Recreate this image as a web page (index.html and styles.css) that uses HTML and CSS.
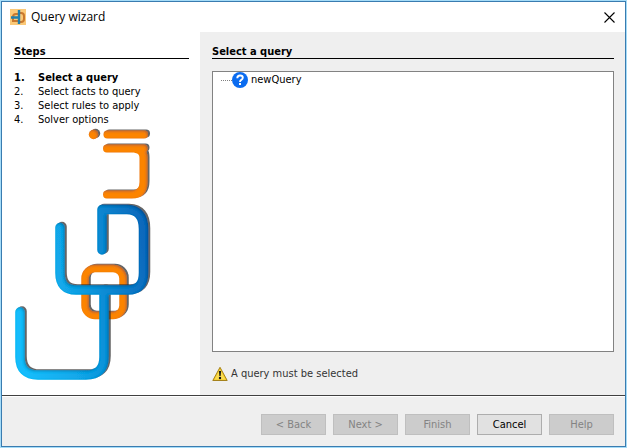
FILE: index.html
```html
<!DOCTYPE html>
<html lang="en">
<head>
<meta charset="utf-8">
<title>Query wizard</title>
<link rel="stylesheet" href="styles.css">
</head>
<body>
<div class="window">
  <header class="titlebar">
    <svg class="app-icon" viewBox="0 0 16 16" aria-hidden="true">
      <rect width="16" height="16" fill="#fbc978"/>
      <path d="M8 4H11Q14 4 14 7V10Q14 13 11 13H8M8 5H6Q3 5 3 8V12H8" fill="none" stroke="#c9792f" stroke-width="2"/>
      <path d="M1 8.500H9M9 1V15" fill="none" stroke="#1f7fae" stroke-width="2.400"/>
    </svg>
    <h1 class="title">Query wizard</h1>
    <button class="close" type="button" aria-label="Close">
      <svg class="close-icon" viewBox="0 0 11 11" aria-hidden="true"><path d="M.5 .5L10.500 10.500M10.500 .5L.5 10.500" stroke="#000" stroke-width="1.100"/></svg>
    </button>
  </header>
  <main class="main">
    <aside class="steps">
      <h2 class="heading">Steps</h2>
      <ol class="step-list">
        <li class="step current"><span class="num">1.</span><span>Select a query</span></li>
        <li class="step"><span class="num">2.</span><span>Select facts to query</span></li>
        <li class="step"><span class="num">3.</span><span>Select rules to apply</span></li>
        <li class="step"><span class="num">4.</span><span>Solver options</span></li>
      </ol>
      <svg class="logo" viewBox="14 127 140 257" aria-hidden="true">
        <defs>
          <linearGradient id="blue" gradientUnits="userSpaceOnUse" x1="15" y1="290" x2="150" y2="270">
            <stop offset="0" stop-color="#12bcfb"/>
            <stop offset=".35" stop-color="#12a8ea"/>
            <stop offset=".7" stop-color="#0d86d0"/>
            <stop offset="1" stop-color="#0c68bb"/>
          </linearGradient>
          <filter id="bevel" filterUnits="userSpaceOnUse" x="10" y="122" width="150" height="266">
            <feOffset in="SourceAlpha" dx="-1" dy="1" result="shifted"/>
            <feGaussianBlur in="shifted" stdDeviation="1.1" result="soft"/>
            <feComposite in="SourceAlpha" in2="soft" operator="out" result="edge"/>
            <feFlood flood-color="#102038" flood-opacity=".5"/>
            <feComposite in2="edge" operator="in" result="shade"/>
            <feOffset in="SourceAlpha" dx="2" dy="-1"/>
            <feGaussianBlur stdDeviation=".7" result="blur"/>
            <feFlood flood-color="#303030" flood-opacity=".75"/>
            <feComposite in2="blur" operator="in" result="shadow"/>
            <feMerge><feMergeNode in="shadow"/><feMergeNode in="SourceGraphic"/><feMergeNode in="shade"/></feMerge>
          </filter>
        </defs>
        <g fill="none" stroke="#fc8406" stroke-width="8" stroke-linecap="round" stroke-linejoin="round" filter="url(#bevel)">
          <circle cx="93.500" cy="134.500" r="4.700" fill="#fc8406" stroke="none"/>
          <path d="M107.500 134.500H144"/>
          <path d="M107 148.500H143.500M136 149Q143.500 150 143.500 158V182Q143.500 194.500 132 194.500H107"/>
          <rect x="85" y="268.500" width="38" height="47" rx="10" stroke-width="7.500"/>
        </g>
        <g fill="none" stroke="url(#blue)" stroke-width="9.500" stroke-linecap="round" stroke-linejoin="round" filter="url(#bevel)">
          <path d="M102 250V209.500H127Q143.500 210 143.500 229V273Q143.500 290 128 290H76Q60 290 60 273V227.500"/>
          <path d="M20 312V357Q20 375 38 375H86Q104 375 104 357V290"/>
        </g>
      </svg>
    </aside>
    <section class="content">
      <h2 class="heading">Select a query</h2>
      <ul class="tree">
        <li class="node">
          <span class="branch"></span>
          <svg class="query-icon" viewBox="0 0 16 16" aria-hidden="true">
            <circle cx="8" cy="8" r="8" fill="#0b6cf0"/>
            <path d="M5.300 6.200Q5.300 3.500 8 3.500Q10.800 3.500 10.800 5.800Q10.800 7 9.300 7.900Q8 8.700 8 10" fill="none" stroke="#fff" stroke-width="1.900"/>
            <rect x="7" y="11" width="2" height="2" fill="#fff"/>
          </svg>
          <span>newQuery</span>
        </li>
      </ul>
      <p class="message">
        <svg class="warning-icon" viewBox="0 0 16 16" aria-hidden="true">
          <path d="M8 1.300L15.200 14.500H.8Z" fill="#f3c925" stroke="#a5821c" stroke-linejoin="round"/>
          <path d="M8 3.500L13.400 13.500H2.600Z" fill="#fbdc50"/>
          <path d="M6.900 5H9.100L8.600 10H7.400Z" fill="#151515"/>
          <circle cx="8" cy="12" r="1.200" fill="#151515"/>
        </svg>
        <span>A query must be selected</span>
      </p>
    </section>
  </main>
  <footer class="footer">
    <button class="button" type="button" disabled>&lt; Back</button>
    <button class="button" type="button" disabled>Next &gt;</button>
    <button class="button" type="button" disabled>Finish</button>
    <button class="button" type="button">Cancel</button>
    <button class="button" type="button" disabled>Help</button>
  </footer>
</div>
</body>
</html>
```
FILE: styles.css
```css
* {
  box-sizing: border-box;
}

body {
  margin: 0;
  padding: 1px;
  min-height: 100vh;
  display: flex;
  background: #a5dcf8;
  color: #000;
  font-family: "DejaVu Sans Condensed", "DejaVu Sans", sans-serif;
  font-size: 11px;
  line-height: 14px;
}

.window {
  flex: 1;
  display: flex;
  flex-direction: column;
  border: 1px solid #3a7cb0;
  background: #efefef;
}

.titlebar {
  display: flex;
  align-items: center;
  height: 30px;
  padding: 0 10px 0 8px;
  background: #fff;
}

.app-icon {
  width: 16px;
  height: 16px;
}

.title {
  flex: 1;
  margin: 0 0 0 5px;
  font: 12px/16px "Open Sans", sans-serif;
}

.close {
  display: flex;
  padding: 0;
  border: 0;
  background: none;
}

.close-icon {
  width: 11px;
  height: 11px;
}

.main {
  flex: 1;
  display: flex;
}

.steps {
  width: 198px;
  padding: 12px 11px 0 12px;
  background: #fff;
}

.heading {
  margin: 0;
  padding-top: 2px;
  border-bottom: 1px solid #000;
  font-size: 11px;
  line-height: 12px;
}

.step-list {
  margin: 12px 0 0;
  padding: 0;
  list-style: none;
}

.step {
  display: flex;
}

.num {
  width: 24px;
}

.current {
  font-weight: bold;
}

.logo {
  display: block;
  width: 140px;
  height: 257px;
}

.content {
  flex: 1;
  display: flex;
  flex-direction: column;
  padding: 12px 11px 13px 12px;
}

.tree {
  flex: 1;
  margin: 12px 0 14px;
  padding: 0 8px;
  border: 1px solid #828282;
  background: #fff;
  list-style: none;
}

.node {
  display: flex;
  align-items: center;
}

.branch {
  width: 11px;
  border-top: 1px dotted #808080;
}

.query-icon {
  width: 16px;
  height: 16px;
  margin-right: 3px;
}

.message {
  display: flex;
  align-items: center;
  gap: 3px;
  margin: 0;
  color: #333;
}

.warning-icon {
  width: 16px;
  height: 16px;
}

.footer {
  display: flex;
  justify-content: flex-end;
  gap: 7px;
  padding: 18px 11px 11px;
  border-top: 1px solid #404040;
  box-shadow: inset 0 1px #fff;
}

.button {
  width: 65px;
  height: 21px;
  padding: 0;
  border: 1px solid #adadad;
  background: #e1e1e1;
  color: #000;
  font: inherit;
}

.button:disabled {
  border-color: #bfbfbf;
  background: #ccc;
  color: #838383;
}
```
